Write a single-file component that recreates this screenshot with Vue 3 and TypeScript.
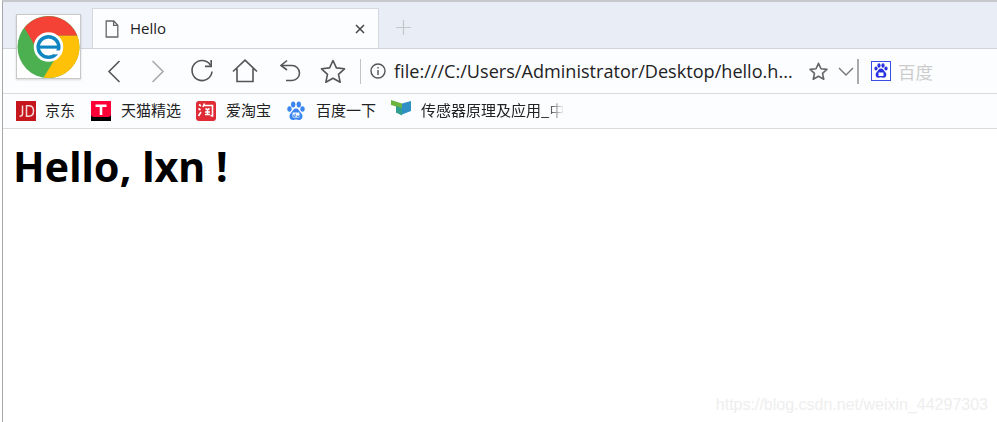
<script setup lang="ts">
interface Bookmark { id: string; label: string }
const bookmarks: Bookmark[] = [
  { id: 'jd', label: '京东' },
  { id: 'tmall', label: '天猫精选' },
  { id: 'taobao', label: '爱淘宝' },
  { id: 'baidu', label: '百度一下' },
  { id: 'book', label: '传感器原理及应用_中' },
]
</script>

<template>
  <div class="window">
    <div class="tabstrip">
      <div class="tab">
        <svg class="doc" width="14" height="18" viewBox="0 0 14 18" fill="none" stroke="#666" stroke-width="1.3">
          <path d="M1.2 1h7.6l4 4.2v11.8H1.2z M8.6 1v4.4h4.2" />
        </svg>
        <span class="tab-title">Hello</span>
        <svg class="close" width="10" height="10" viewBox="0 0 10 10" stroke="#444" stroke-width="1.5">
          <path d="M1 1l8 8M9 1l-8 8" />
        </svg>
      </div>
      <svg class="plus" width="15" height="15" viewBox="0 0 15 15" stroke="#c4c7cc" stroke-width="1.2">
        <path d="M7.5 0v15M0 7.5h15" />
      </svg>
    </div>

    <div class="toolbar">
      <svg class="back" width="14" height="23" viewBox="0 0 14 23" fill="none" stroke="#555" stroke-width="1.6"><path d="M12.5 1L2 11.5 12.5 22" /></svg>
      <svg class="forward" width="14" height="23" viewBox="0 0 14 23" fill="none" stroke="#aaa" stroke-width="1.6"><path d="M1.5 1L12 11.5 1.5 22" /></svg>
      <svg class="reload" width="24" height="24" viewBox="0 0 24 24" fill="none" stroke="#555" stroke-width="1.6"><path d="M20.5 6.2A10 10 0 1 0 22 12.5" /><path d="M21.2 1v6.4h-6.2" /></svg>
      <svg class="home" width="26" height="24" viewBox="0 0 26 24" fill="none" stroke="#555" stroke-width="1.6"><path d="M1 12.5L13 1.2l12 11.3M5 9.5V22.5h16V9.5" /></svg>
      <svg class="undo" width="22" height="24" viewBox="0 0 22 24" fill="none" stroke="#555" stroke-width="1.6"><path d="M8 1.5L2 6.5l6 4.5" /><path d="M2 6.5h11a7.5 7.5 0 0 1 0 15H7" /></svg>
      <svg class="star" width="26" height="24" viewBox="0 0 26 24" fill="none" stroke="#555" stroke-width="1.6" stroke-linejoin="round"><path d="M13 1.5l3.4 7.4 8.1.9-6 5.5 1.7 8-7.2-4.1-7.2 4.1 1.7-8-6-5.5 8.1-.9z" /></svg>
      <span class="sep"></span>
      <svg class="info" width="16" height="16" viewBox="0 0 16 16" fill="none" stroke="#555" stroke-width="1.4"><circle cx="8" cy="8" r="7" /><path d="M8 7v5M8 4v1.6" /></svg>
      <span class="url">file:///C:/Users/Administrator/Desktop/hello.h...</span>
      <svg class="star-small" width="19" height="18" viewBox="0 0 26 24" fill="none" stroke="#666" stroke-width="2.2" stroke-linejoin="round"><path d="M13 1.5l3.4 7.4 8.1.9-6 5.5 1.7 8-7.2-4.1-7.2 4.1 1.7-8-6-5.5 8.1-.9z" /></svg>
      <svg class="chev" width="16" height="9" viewBox="0 0 16 9" fill="none" stroke="#777" stroke-width="1.4"><path d="M1 1l7 7 7-7" /></svg>
      <span class="sep dark"></span>
      <svg class="search-icon" width="20" height="20" viewBox="0 0 20 20">
        <rect x="0.5" y="0.5" width="19" height="19" fill="#fff" stroke="#3a4ee0" />
        <g fill="#2932e1">
          <ellipse cx="5" cy="7.5" rx="1.6" ry="2" />
          <ellipse cx="8" cy="4.5" rx="1.6" ry="2.2" />
          <ellipse cx="12" cy="4.5" rx="1.6" ry="2.2" />
          <ellipse cx="15" cy="7.5" rx="1.6" ry="2" />
          <path d="M10 7.500c-2.200 0-2.800 2.200-4.400 3.700-1.700 1.800-1 5.500 1.800 5.500 1 0 1.700-.4 2.600-.4s1.600.4 2.600.4c2.800 0 3.500-3.700 1.800-5.500C12.800 9.700 12.200 7.500 10 7.500z" />
        </g>
        <rect x="7.5" y="11.5" width="5" height="3.5" fill="#fff" />
      </svg>
      <span class="search-text">百度</span>
    </div>

    <div class="bookmarks">
      <div v-for="b in bookmarks" :key="b.id" class="bm" :class="'bm-' + b.id">
        <svg v-if="b.id === 'jd'" width="20" height="20" viewBox="0 0 20 20">
          <rect width="20" height="20" fill="#c5161d" />
          <path d="M6.500 4.500v8.500c0 1.500-1 2.300-3 2.300M10.500 4.800v10.400h2.300c3.200 0 4.700-2 4.700-5.200s-1.500-5.200-4.700-5.200z" fill="none" stroke="#f5d9da" stroke-width="1.5" />
        </svg>
        <svg v-else-if="b.id === 'tmall'" width="20" height="20" viewBox="0 0 20 20">
          <rect width="20" height="20" fill="#000" />
          <path d="M0 0h20v13q0 3-3 3H3q-3 0-3-3z" fill="#ff0036" />
          <path d="M4.500 3.500h11v2.500H11.300v8H8.700V6H4.500z" fill="#fff" />
        </svg>
        <svg v-else-if="b.id === 'taobao'" width="20" height="20" viewBox="0 0 20 20">
          <rect width="20" height="20" rx="3" fill="#de2b35" />
          <path d="M3 3.500l2 1.500M2.500 7.500l2 1.500M2.500 15l2.500-4M8.500 2.500l-1.500 3.500M8 4.500h8.500v10.500l-2-.5M9.500 7.500l2 1.500 2-1.500M9 11h5M11.500 8.500v5M9 13.500h5" fill="none" stroke="#fff" stroke-width="1.6" />
        </svg>
        <svg v-else-if="b.id === 'baidu'" width="18" height="20" viewBox="0 0 18 20">
          <g fill="#3b86f0">
            <ellipse cx="2.500" cy="8" rx="2.200" ry="2.800" />
            <ellipse cx="6.200" cy="3.500" rx="2.200" ry="3" />
            <ellipse cx="11.800" cy="3.500" rx="2.200" ry="3" />
            <ellipse cx="15.500" cy="8" rx="2.200" ry="2.800" />
            <path d="M9 7.500c-2.800 0-3.300 2.800-5.300 4.700-2.200 2.100-1.300 6.800 2.100 6.800 1.300 0 2.100-.5 3.200-.5s1.900.5 3.200.5c3.400 0 4.300-4.700 2.100-6.800C12.300 10.300 11.800 7.500 9 7.500z" />
          </g>
          <rect x="5.500" y="11.500" width="7" height="5" rx="1" fill="#fff" />
          <path d="M8.300 12.500v3h-2v-1.500h2M10 14v1.500h2V14" fill="none" stroke="#3b86f0" stroke-width="0.8" />
        </svg>
        <svg v-else class="book-icon" width="20" height="16" viewBox="0 0 20 16">
          <path d="M0 0l11 3.500v11L5 12.500V6.500L0 5z" fill="#6cb33f" />
          <path d="M11 3.500L20 1v10l-9 3.500z" fill="#2e8fc5" />
          <path d="M5 6l6 2v7.500l-6-3z" fill="#2f9e8f" />
        </svg>
        <span class="bm-label">{{ b.label }}</span>
      </div>
    </div>

    <main class="page">
      <h1>Hello, lxn !</h1>
    </main>

    <div class="logo">
      <svg width="64" height="64" viewBox="0 0 64 64">
        <circle cx="32" cy="32" r="31.5" fill="#4caf50" />
        <path d="M7.500 12.500A31.500 31.500 0 0 1 61.300 20.500H32L19 32z" fill="#f44336" />
        <path d="M61.300 20.500A31.500 31.500 0 0 1 27 63.100L40 42 32 20.500z" fill="#ffc107" />
        <circle cx="32" cy="32" r="15" fill="#fff" />
        <circle cx="32" cy="32" r="10.500" fill="none" stroke="#0f86c2" stroke-width="3.5" />
        <path d="M21 30.500h22v3.200H21z" fill="#0f86c2" />
        <path d="M37 35.500h8v4h-8z" fill="#fff" />
      </svg>
    </div>

    <div class="watermark">https://blog.csdn.net/weixin_44297303</div>
  </div>
</template>

<style scoped>
.window {
  position: relative;
  width: 995px;
  height: 422px;
  box-sizing: border-box;
  border-left: 1px solid #a8a8a8;
  margin-left: 2px;
  border-top: 2px solid #c6c8cc;
  background: #fff;
  overflow: hidden;
  font-family: "Open Sans", "Noto Sans CJK SC", sans-serif;
}
.tabstrip {
  height: 47px;
  box-sizing: border-box;
  display: flex;
  align-items: flex-start;
  background: #e9edf5;
  border-bottom: 1px solid #d0d3d9;
  padding-left: 89px;
}
.tab {
  width: 287px;
  height: 40px;
  margin-top: 6px;
  box-sizing: border-box;
  background: #fcfdff;
  border: 1px solid #d5d8de;
  border-bottom: none;
  display: flex;
  align-items: center;
  padding: 0 13px 0 12px;
}
.tab-title {
  font-size: 15px;
  color: #222;
  margin-left: 11px;
  margin-bottom: 2px;
  flex: 1;
}
.plus { margin: 18px 0 0 17px; }
.toolbar {
  height: 45px;
  box-sizing: border-box;
  display: flex;
  align-items: center;
  background: #fcfdff;
  border-bottom: 1px solid #d8dade;
  padding-left: 104px;
}
.forward { margin-left: 30px; }
.reload { margin-left: 25px; }
.home { margin-left: 18px; }
.undo { margin-left: 21px; }
.star { margin-left: 19px; }
.sep {
  width: 1px;
  height: 25px;
  background: #c4c4c4;
  margin-left: 14px;
}
.info { margin-left: 9px; }
.url {
  font-size: 18.1px;
  color: #222;
  margin-left: 8px;
  width: 415px;
  white-space: nowrap;
}
.chev { margin-left: 10px; }
.sep.dark { width: 2px; background: #aaa; margin-left: 3px; }
.search-icon { margin-left: 12px; }
.search-text {
  font-size: 17.5px;
  color: #ccc;
  margin-left: 7px;
  font-family: "Noto Sans CJK SC", sans-serif;
}
.bookmarks {
  height: 35px;
  box-sizing: border-box;
  display: flex;
  align-items: center;
  background: #fcfdff;
  border-bottom: 1px solid #d8dade;
  padding-left: 13px;
}
.bm {
  display: flex;
  align-items: center;
  margin-right: 15px;
}
.bm-jd { margin-right: 16px; }
.bm-taobao { margin-right: 16px; }
.bm-label {
  font-size: 15px;
  line-height: 20px;
  color: #222;
  margin-left: 10px;
  margin-top: -2px;
  white-space: nowrap;
  font-family: "Noto Sans CJK SC", sans-serif;
}
.bm-jd .bm-label { margin-left: 9px; }
.bm-baidu .bm-label { margin-left: 11px; }
.book-icon { margin-top: -6px; }
.bm-book .bm-label {
  -webkit-mask-image: linear-gradient(to right, #000 88%, transparent 100%);
  mask-image: linear-gradient(to right, #000 88%, transparent 100%);
}
.page { padding: 9px 0 0 10px; }
h1 {
  margin: 0;
  font-family: "Noto Sans", "Liberation Sans", sans-serif;
  font-size: 41.3px;
  font-weight: 700;
  line-height: 56px;
  color: #000;
}
.logo {
  position: absolute;
  left: 13px;
  top: 12px;
  width: 65px;
  height: 65px;
  box-sizing: border-box;
  background: #fff;
  border: 1px solid #c8c8c8;
  box-shadow: 0 1px 2px rgba(0, 0, 0, 0.15);
  display: flex;
  align-items: center;
  justify-content: center;
}
.watermark {
  position: absolute;
  right: 9px;
  bottom: 8px;
  font-family: "Liberation Sans", Arial, sans-serif;
  font-size: 16px;
  color: #eeeeee;
  white-space: nowrap;
}
</style>
